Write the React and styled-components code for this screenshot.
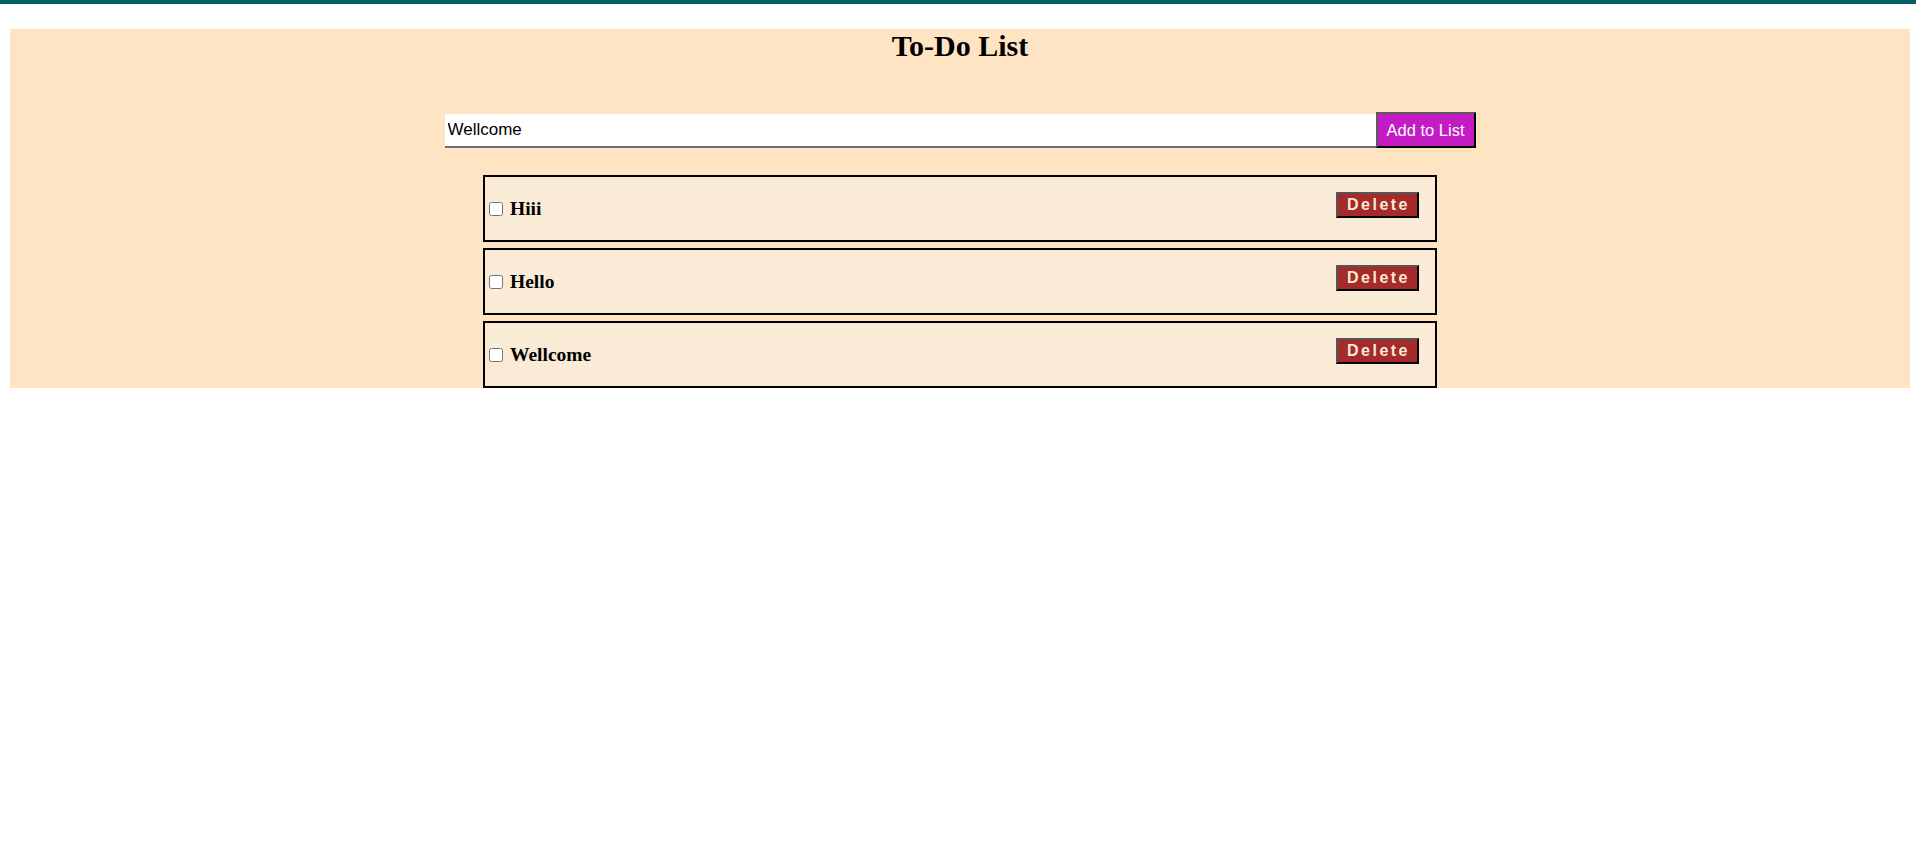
import React, { useState } from "react";
import styled, { createGlobalStyle } from "styled-components";

const GlobalStyle = createGlobalStyle`
  html, body { margin: 0; padding: 0; background: #ffffff; }
  body { font-family: "Liberation Serif", "Times New Roman", serif; }
`;

const TopBar = styled.div`
  height: 4px;
  background: #035e66;
`;

const Container = styled.div`
  margin: 25px 0 0 10px;
  width: 1900px;
  background: #ffe4c4;
  display: flex;
  flex-direction: column;
  align-items: center;
`;

const Title = styled.h1`
  margin: 0;
  font-family: "Liberation Serif", "Times New Roman", serif;
  font-weight: bold;
  font-size: 30px;
  line-height: 34px;
  color: #000;
`;

const Form = styled.div`
  display: flex;
  align-items: flex-end;
  margin-top: 49px;
`;

const TextInput = styled.input`
  box-sizing: border-box;
  width: 931px;
  height: 34px;
  border: none;
  border-bottom: 2px solid #6f6f6f;
  padding: 0 3px;
  font-family: "Liberation Sans", Arial, sans-serif;
  font-size: 17px;
  color: #000;
  background: #fff;
  outline: none;
`;

const AddButton = styled.button`
  box-sizing: border-box;
  width: 100px;
  height: 36px;
  padding: 0 6px;
  background: #c31cc4;
  color: #fff;
  font-family: "Liberation Sans", Arial, sans-serif;
  font-size: 16.5px;
  border: 2px solid;
  border-color: #5a5a5a #000 #000 #5a5a5a;
  cursor: pointer;
`;

const List = styled.ul`
  list-style: none;
  margin: 27px 0 0 0;
  padding: 0;
  display: flex;
  flex-direction: column;
  gap: 6px;
`;

const Item = styled.li`
  box-sizing: border-box;
  width: 954px;
  height: 67px;
  border: 2px solid #000;
  background: #faebd7;
  display: flex;
  align-items: center;
  justify-content: space-between;
`;

const Label = styled.label`
  display: flex;
  align-items: center;
  font-family: "Liberation Serif", "Times New Roman", serif;
  font-weight: bold;
  font-size: 19.5px;
  color: #000;
`;

const Check = styled.input`
  width: 14px;
  height: 14px;
  margin: 3px 7px 3px 4px;
`;

const DeleteButton = styled.button`
  box-sizing: border-box;
  align-self: flex-start;
  margin: 15px 16px 0 0;
  width: 83px;
  height: 26px;
  padding: 0 0 0 2px;
  background: #a52a2a;
  color: #faebd7;
  font-family: "Liberation Sans", Arial, sans-serif;
  font-weight: bold;
  font-size: 16px;
  letter-spacing: 2.5px;
  border: 2px solid;
  border-color: #555 #000 #000 #555;
  cursor: pointer;
`;

export default function App() {
  const [text, setText] = useState("Wellcome");
  const [items, setItems] = useState(["Hiii", "Hello", "Wellcome"]);

  return (
    <>
      <GlobalStyle />
      <TopBar />
      <Container>
        <Title>To-Do List</Title>
        <Form>
          <TextInput value={text} onChange={(e) => setText(e.target.value)} />
          <AddButton onClick={() => text && setItems([...items, text])}>
            Add to List
          </AddButton>
        </Form>
        <List>
          {items.map((it, i) => (
            <Item key={i}>
              <Label>
                <Check type="checkbox" />
                {it}
              </Label>
              <DeleteButton
                onClick={() => setItems(items.filter((_, j) => j !== i))}
              >
                Delete
              </DeleteButton>
            </Item>
          ))}
        </List>
      </Container>
    </>
  );
}
